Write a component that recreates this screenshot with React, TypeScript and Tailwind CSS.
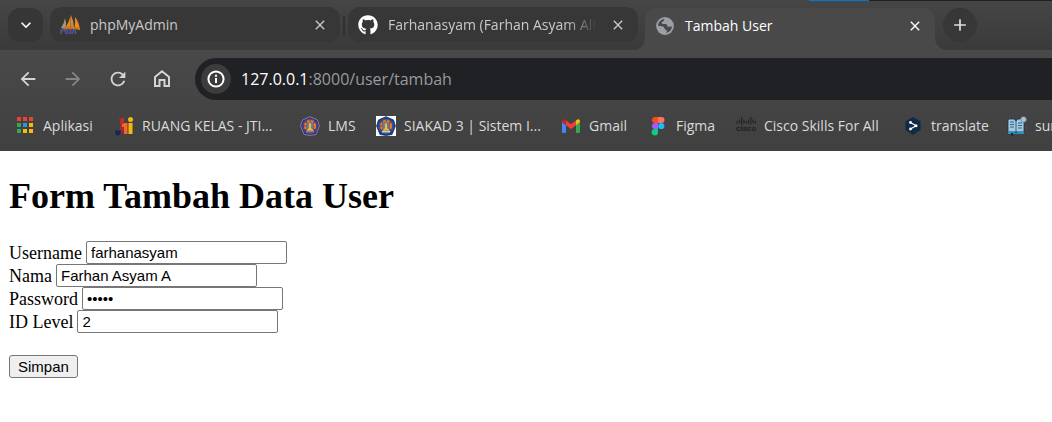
import type { ReactNode } from "react";
import { FaGithub } from "react-icons/fa";
import { MdArrowBack, MdArrowForward, MdRefresh, MdAdd, MdClose, MdExpandMore } from "react-icons/md";

function PmaIcon() {
  return (
    <svg viewBox="0 0 20 20" className="size-5 shrink-0" aria-hidden="true">
      <path d="M1 13 Q4.500 8 5 3 Q6.500 8 6 13Z" fill="#a9957c" />
      <path d="M5 13 Q9.500 7 10.500 0 Q11 8 10 13Z" fill="#f28a13" />
      <path d="M10.500 13 L11 0 Q14 7 14 13Z" fill="#c98a4c" />
      <path d="M14.500 13 Q15.500 8 15 2 Q19 7 20 15Z" fill="#f28a13" />
      <path d="M2 14 L5 11 L19 12.500 L19.500 14.500Z" fill="#c9742a" />
      <text x="0" y="19" fontSize="7.500" fontWeight="700" fontStyle="italic" fontFamily="Liberation Sans, sans-serif" fill="#a3a6cf" stroke="#3b3e78" strokeWidth="0.6" textAnchor="start">PMA</text>
    </svg>
  );
}

function GlobeIcon() {
  return (
    <svg viewBox="0 0 20 20" className="size-5 shrink-0" aria-hidden="true">
      <circle cx="10" cy="10" r="8.9" fill="#9aa0a6" />
      <path d="M10.500 2.800 C8 3.200 9.800 5 8 5.400 C6 5.800 6.300 7.800 8.200 7.900 L10.800 8 C12.600 8.300 11.600 10.500 13.200 10.700 L17 10.400 C16.800 13 14.800 16 11.200 16.900 C12.600 15 11.500 14 10.300 13.600 C8.600 13 9.800 11 8 10.700 L3 9.800 C3.300 6 6 3 10.500 2.800Z" fill="#494949" />
      <path d="M3 10 L8 10.700 C9.800 11 8.600 13 10.300 13.600 L8.700 14 V17 C5 16 3 12.800 3 10Z" fill="#9aa0a6" />
    </svg>
  );
}

function HomeIcon() {
  return (
    <svg viewBox="0 0 20 20" className="size-5" fill="none" stroke="currentColor" strokeWidth="2" aria-hidden="true">
      <path d="M3 8 L10 2.300 L17 8 V17 H12.500 V11 H7.500 V17 H3 Z" />
    </svg>
  );
}

function InfoIcon() {
  return (
    <svg viewBox="0 0 20 20" className="size-5" fill="none" stroke="currentColor" strokeWidth="2" aria-hidden="true">
      <circle cx="10" cy="10" r="7.6" />
      <path d="M10 9 V14 M10 5.8 V7.8" />
    </svg>
  );
}

function AppsIcon() {
  const colors = ["#ea4335", "#ea4335", "#ea4335", "#34a853", "#2196f3", "#fbbc04", "#34a853", "#fbbc04", "#fbbc04"];
  return (
    <svg viewBox="0 0 20 20" className="size-5" aria-hidden="true">
      {colors.map((c, i) => (
        <rect key={i} x={2 + (i % 3) * 6} y={1 + Math.floor(i / 3) * 6} width="4" height="4" fill={c} />
      ))}
    </svg>
  );
}

function JtiIcon() {
  return (
    <svg viewBox="0 0 20 20" className="size-5" aria-hidden="true">
      <path d="M5 2 H10 V13 Q10 18 5 18 H3 Q6.500 16 6 8 Q5.500 5 5 2Z" fill="#a52a2e" />
      <path d="M1 14.500 H7 Q7 19 4 19.500 Q1 20 1 14.500Z" fill="#14265a" />
      <path d="M8 7 H13.500 V18 H10 V11 H8Z" fill="#f26b21" />
      <path d="M7 2 H10 V8 H7Z" fill="#b8322b" />
      <circle cx="16.500" cy="3.500" r="2.500" fill="#fbb414" />
      <path d="M14.500 7 H18.500 V18 H14.500Z" fill="#fbb414" />
    </svg>
  );
}

function CampusIcon({ light = false }: { light?: boolean }) {
  return (
    <svg viewBox="0 0 20 20" className="size-5" aria-hidden="true">
      {light && <rect width="20" height="20" fill="#ffffff" />}
      <path d="M10 0.700 L17.500 4 L19.400 10 L16 18.500 L10 19.400 L4 18.500 L0.600 10 L2.500 4Z" fill={light ? "#1c3e86" : "#332d74"} stroke={light ? "#17326c" : "#8d86a3"} strokeWidth="0.900" />
      <circle cx="10" cy="10.300" r="7.200" fill="none" stroke="#5f70ab" strokeWidth="0.600" />
      <circle cx="10" cy="10" r="5" fill="none" stroke="#ed7624" strokeWidth="2.400" strokeDasharray="3.100 0.827" />
      <circle cx="10" cy="10" r="3.800" fill="#6c7893" />
      <path d="M10 5.500 L11.200 9 L11 12 L13.500 14.500 H6.500 L9 12 L8.800 9Z" fill="#e2c13a" />
      <path d="M6 15 H14 V16.500 H6Z" fill={light ? "#c6d1e5" : "#817aa2"} />
    </svg>
  );
}

function GmailIcon() {
  return (
    <svg viewBox="0 0 20 20" className="size-5" aria-hidden="true">
      <path d="M1 6 L5 9 V17 H2.200 Q1 17 1 15.800Z" fill="#4285f4" />
      <path d="M15 9 L19 6 V15.800 Q19 17 17.800 17 H15Z" fill="#34a853" />
      <path d="M5 4.500 L10 8.300 L15 4.500 V9.300 L10 13 L5 9.300Z" fill="#ea4335" />
      <path d="M1 6 V5 Q1 3.200 2.800 3.200 Q3.500 3.200 5 4.500 V9.300Z" fill="#c5221f" />
      <path d="M19 6 V5 Q19 3.200 17.200 3.200 Q16.500 3.200 15 4.500 V9.300Z" fill="#fbbc04" />
    </svg>
  );
}

function FigmaIcon() {
  return (
    <svg viewBox="0 0 20 20" className="size-5" aria-hidden="true">
      <path d="M10 1 H7 a3 3 0 0 0 0 6 H10Z" fill="#f24e1e" />
      <path d="M10 1 H13.500 a3 3 0 0 1 0 6 H10Z" fill="#ff7262" />
      <path d="M10 7 H7 a3 3 0 0 0 0 6 H10Z" fill="#a259ff" />
      <circle cx="13.300" cy="10" r="3.100" fill="#1abcfe" />
      <path d="M10 13 H7 a3.200 3.200 0 1 0 3 3.200Z" fill="#0acf83" />
    </svg>
  );
}

function CiscoIcon() {
  return (
    <svg viewBox="0 0 20 20" className="size-5" aria-hidden="true">
      <path d="M1 5 V7.500 M3.300 3.500 V7.500 M5.600 1 V8.500 M7.900 3.500 V7.500 M10.200 5 V7.500 M12.500 3.500 V7.500 M14.800 1 V8.500 M17.100 3.500 V7.500 M19.400 5 V7.500" stroke="#202020" strokeWidth="1.100" fill="none" />
      <text x="0" y="15" fontSize="8" fontWeight="700" fontFamily="Liberation Sans, sans-serif" fill="#202020">cisco</text>
    </svg>
  );
}

function DeeplIcon() {
  return (
    <svg viewBox="0 0 20 20" className="size-5" aria-hidden="true">
      <path d="M10 1 L17.500 5.200 V14 L10 19 L2.500 14 V5.200Z" fill="#0f2b46" />
      <path d="M7.500 6.500 L13 9.700 L7.500 13" stroke="#ffffff" strokeWidth="1.100" fill="none" />
      <circle cx="7.500" cy="6.500" r="1.400" fill="#fff" />
      <circle cx="13" cy="9.700" r="1.500" fill="#fff" />
      <circle cx="7.500" cy="13" r="1.400" fill="#fff" />
    </svg>
  );
}

function BookIcon() {
  return (
    <svg viewBox="0 0 20 20" className="size-5" aria-hidden="true">
      <path d="M1 4 L2 3 H7 L9 5 L11 3 H14 L17 5 V16 H1Z" fill="#9ecbe8" stroke="#22303d" strokeWidth="0.800" />
      <path d="M9 5 V16 M3 6 H7 M3 8.500 H7 M3 11 H7 M11 7 H15 M11 9.500 H15 M11 12 H15" stroke="#34566e" strokeWidth="0.900" />
      <path d="M1 16 L5 15 L9 17 L13 15 L17 16 V18 H1Z" fill="#2b94b8" />
      <circle cx="16.500" cy="3.500" r="2.800" fill="#a9bfca" stroke="#6d8592" strokeWidth="0.700" />
      <path d="M4 17 H6 V19.500 H4Z" fill="#111c4a" />
      <circle cx="18.800" cy="12" r="0.900" fill="#5d3f92" />
    </svg>
  );
}

function TabFoot({ side }: { side: "left" | "right" }) {
  return (
    <svg
      viewBox="0 0 12 12"
      className={side === "left" ? "absolute bottom-0 right-full size-3" : "absolute bottom-0 left-full size-3"}
      aria-hidden="true"
    >
      <path d={side === "left" ? "M12 0 V12 H0 A12 12 0 0 0 12 0Z" : "M0 0 V12 H12 A12 12 0 0 1 0 0Z"} fill="#494949" />
    </svg>
  );
}

function Tab({ icon, title, active = false, fade = false }: { icon: ReactNode; title: string; active?: boolean; fade?: boolean }) {
  return (
    <div
      className={
        active
          ? "relative mt-2 flex h-[42px] w-[290px] shrink-0 items-start rounded-t-xl bg-[#494949] pl-[10px] pr-3 text-white"
          : "mt-[7px] flex h-[35px] w-[290px] shrink-0 items-start rounded-xl bg-[#373737] pl-[10px] pr-3 text-[#c9c9c9]"
      }
    >
      {active && <TabFoot side="left" />}
      <a href="#" className="flex h-[35px] min-w-0 flex-1 items-center gap-[10px]">
        {icon}
        <span
          className={
            fade
              ? "whitespace-nowrap pt-px text-sm [mask-image:linear-gradient(to_right,black_85%,transparent)]"
              : "whitespace-nowrap pt-px text-sm"
          }
        >
          {title}
        </span>
      </a>
      <button type="button" aria-label="Close tab" className="ml-3 flex h-[35px] items-center">
        <MdClose className="size-4" />
      </button>
      {active && <TabFoot side="right" />}
    </div>
  );
}

const bookmarks = [
  { label: "Aplikasi", icon: <AppsIcon />, width: "w-[99px]" },
  { label: "RUANG KELAS - JTI...", icon: <JtiIcon />, width: "w-[186px]" },
  { label: "LMS", icon: <CampusIcon />, width: "w-[76px]" },
  { label: "SIAKAD 3 | Sistem I...", icon: <CampusIcon light />, width: "w-[185px]" },
  { label: "Gmail", icon: <GmailIcon />, width: "w-[87px]" },
  { label: "Figma", icon: <FigmaIcon />, width: "w-[88px]" },
  { label: "Cisco Skills For All", icon: <CiscoIcon />, width: "w-[167px]" },
  { label: "translate", icon: <DeeplIcon />, width: "w-[104px]" },
  { label: "sur", icon: <BookIcon />, width: "w-[80px]" },
];

const fields = [
  { id: "username", label: "Username", type: "text", value: "farhanasyam" },
  { id: "nama", label: "Nama", type: "text", value: "Farhan Asyam A" },
  { id: "password", label: "Password", type: "password", value: "12345" },
  { id: "level", label: "ID Level", type: "text", value: "2" },
];

export default function App() {
  return (
    <div className="min-h-screen overflow-hidden bg-white">
      <header className="font-['Open_Sans',sans-serif]">
        <div className="relative flex h-[50px] bg-linear-to-b from-[#464646] to-[#3a3a3a] pl-2">
          <div className="absolute right-0 top-0 flex h-px w-[243px]">
            <div className="w-[60px] bg-[#0078d7]" />
            <div className="flex-1 bg-[#202020]" />
          </div>
          <button type="button" aria-label="Search tabs" className="mr-[7px] mt-2 flex h-[34px] w-[35px] shrink-0 items-center justify-center rounded-xl bg-[#363636] text-white">
            <MdExpandMore className="size-5" />
          </button>
          <Tab icon={<PmaIcon />} title="phpMyAdmin" />
          <div className="mx-[3px] mt-4 h-5 w-[2px] shrink-0 rounded-full bg-[#303030]" />
          <Tab icon={<FaGithub className="size-5 shrink-0 text-white" />} title="Farhanasyam (Farhan Asyam Alf" fade />
          <div className="w-[7px] shrink-0" />
          <Tab icon={<GlobeIcon />} title="Tambah User" active />
          <button type="button" aria-label="New tab" className="relative ml-2 mt-2 flex size-[34px] shrink-0 items-center justify-center rounded-full bg-[#373737] text-[#dedede]">
            <MdAdd className="size-5" />
          </button>
        </div>

        <div className="bg-linear-to-b from-[#494949] to-[#404040]">
          <div className="flex items-center pl-[17px] pt-2">
            <nav className="flex w-[178px] shrink-0 items-center gap-[23px] text-[#d4d4d4]">
              <button type="button" aria-label="Back"><MdArrowBack className="size-[22px]" /></button>
              <button type="button" aria-label="Forward" className="text-[#858585]"><MdArrowForward className="size-[22px]" /></button>
              <button type="button" aria-label="Reload"><MdRefresh className="size-[22px]" /></button>
              <button type="button" aria-label="Home"><HomeIcon /></button>
            </nav>
            <div className="flex h-[42px] min-w-0 flex-1 items-center rounded-l-full bg-[#202124] pl-[6px]">
              <button type="button" aria-label="Site information" className="flex size-[30px] shrink-0 items-center justify-center rounded-full bg-[#3c3c3c] text-white">
                <InfoIcon />
              </button>
              <a href="#" className="ml-[10px] text-base text-[#9a9a9a]">
                <span className="text-white">127.0.0.1</span>:8000/user/tambah
              </a>
            </div>
          </div>
          <nav className="flex h-[51px] items-center overflow-hidden pl-[15px]">
            {bookmarks.map((b) => (
              <a key={b.label} href="#" className={`${b.width} flex shrink-0 items-center gap-2 whitespace-nowrap text-sm text-[#dadada]`}>
                {b.icon}
                {b.label}
              </a>
            ))}
          </nav>
        </div>
      </header>

      <main className="px-[9px] pt-6 font-['Liberation_Serif',serif] text-lg text-black">
        <h1 className="text-4xl leading-[42px] font-bold">Form Tambah Data User</h1>
        <form className="pt-6" onSubmit={(e) => e.preventDefault()}>
          {fields.map((f) => (
            <div key={f.id} className="flex h-[23px] items-center gap-1">
              <label htmlFor={f.id}>{f.label}</label>
              <input
                id={f.id}
                type={f.type}
                defaultValue={f.value}
                className="h-[23px] w-[201px] rounded-xs border border-[#767676] bg-white px-1 font-['Liberation_Sans',sans-serif] text-[15px]"
              />
            </div>
          ))}
          <button type="submit" className="mt-[22px] flex h-[23px] items-center rounded-[3px] border border-[#767676] bg-[#efefef] px-2 font-['Liberation_Sans',sans-serif] text-[15px]">
            Simpan
          </button>
        </form>
      </main>
    </div>
  );
}
